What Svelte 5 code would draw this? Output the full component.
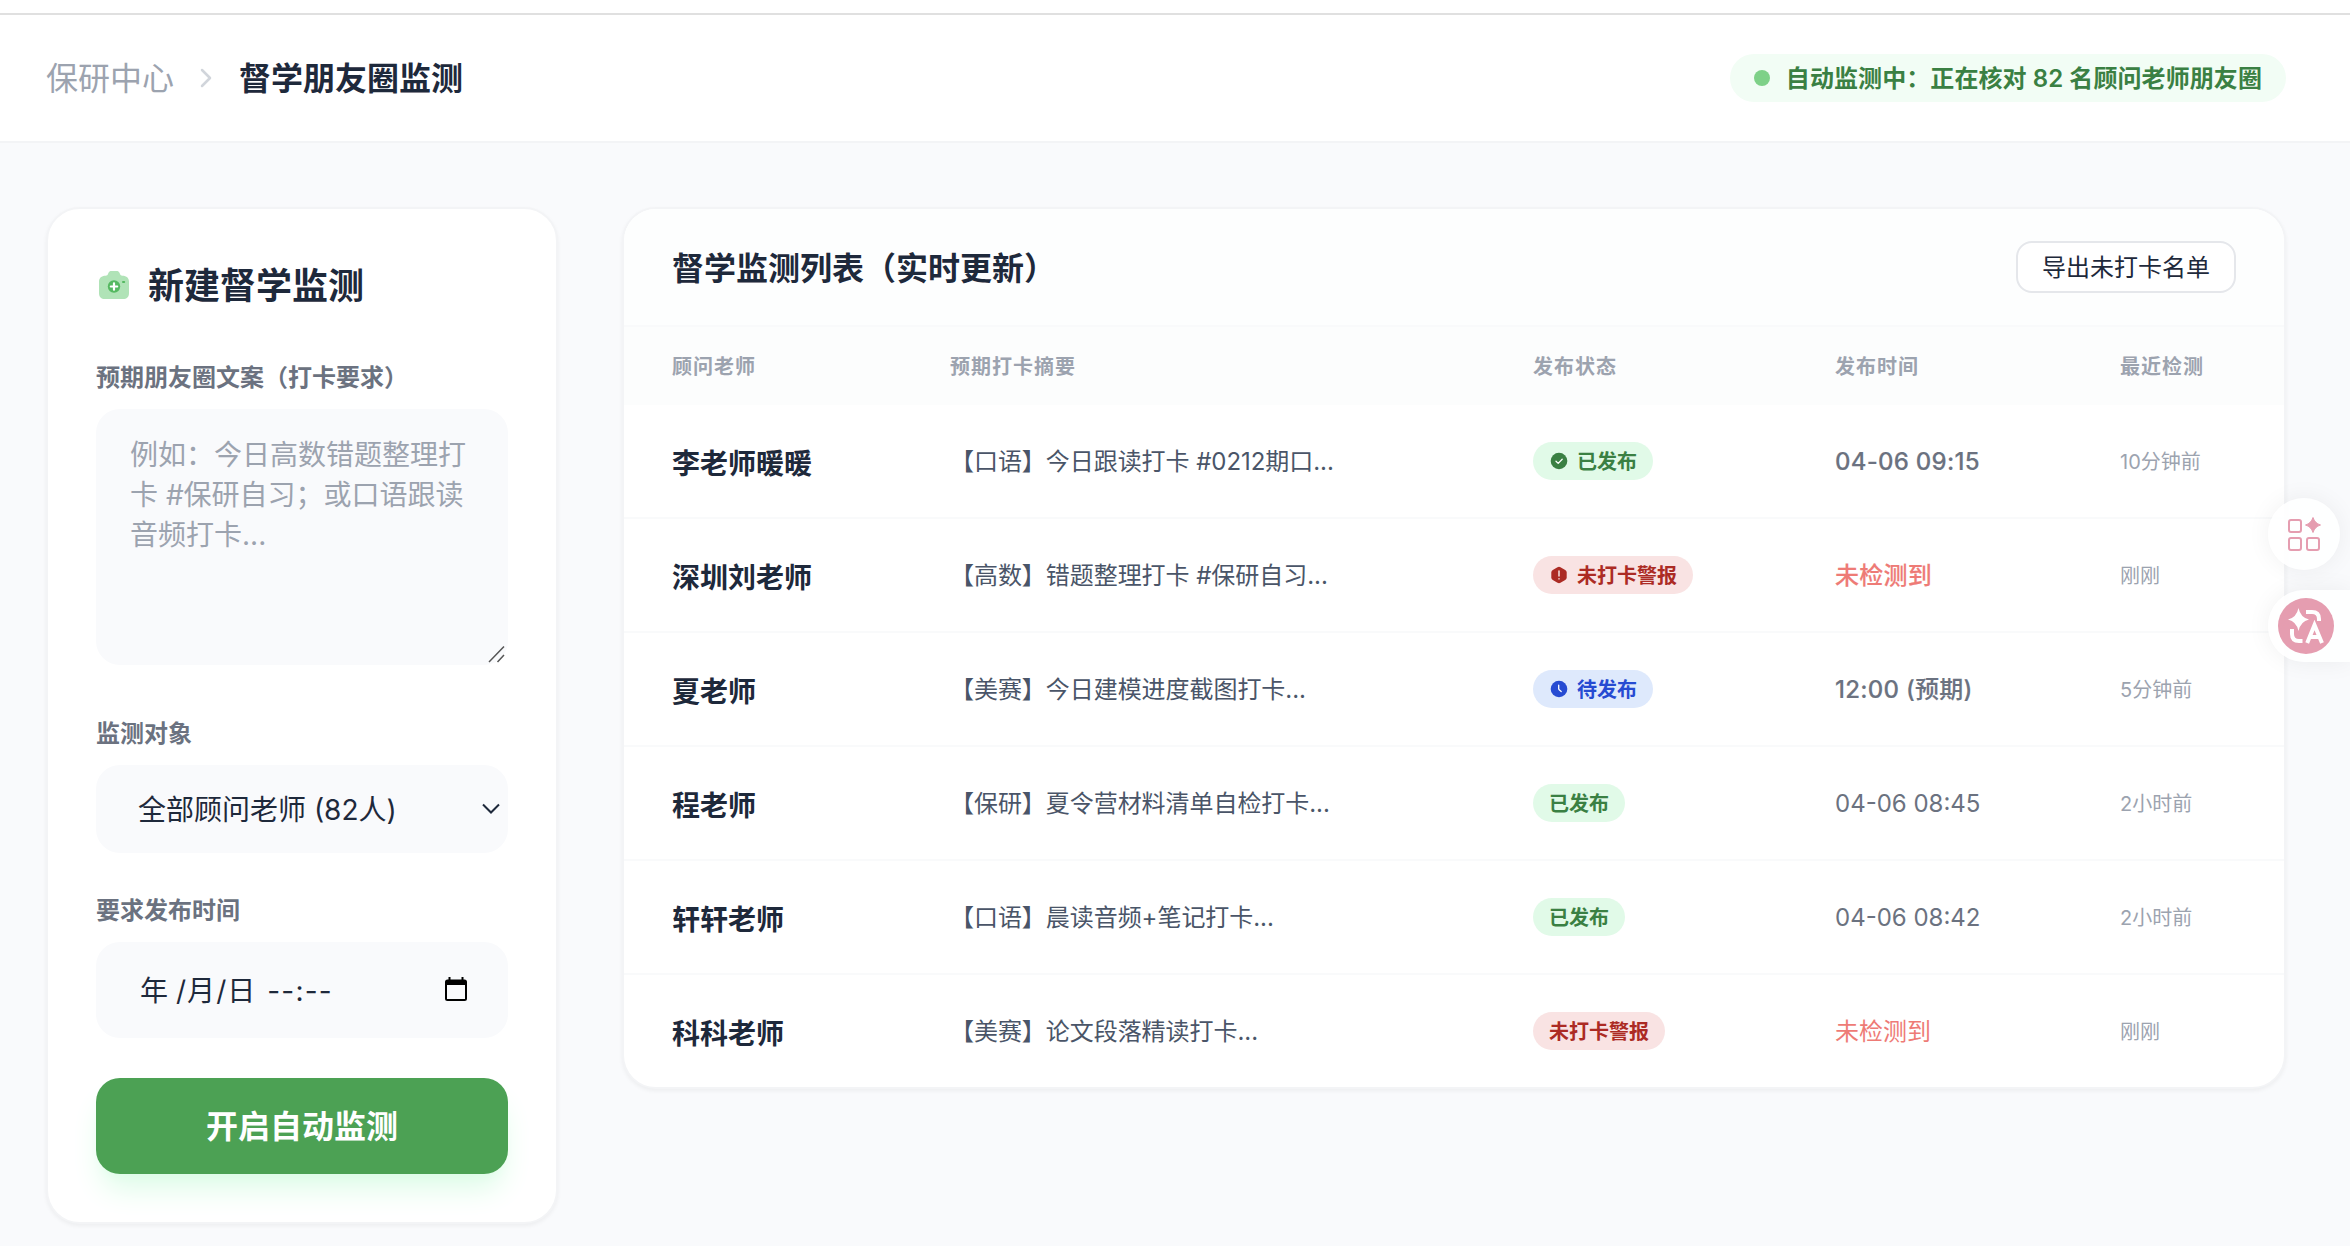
<script>
	let content = '';
	let target = '全部顾问老师 (82人)';

	const columns = ['顾问老师', '预期打卡摘要', '发布状态', '发布时间', '最近检测'];

	const rows = [
		{ name: '李老师暖暖', summary: '【口语】今日跟读打卡 #0212期口...', status: 'done', icon: true, time: '04-06 09:15', checked: '10分钟前' },
		{ name: '深圳刘老师', summary: '【高数】错题整理打卡 #保研自习...', status: 'alert', icon: true, time: '未检测到', checked: '刚刚' },
		{ name: '夏老师', summary: '【美赛】今日建模进度截图打卡...', status: 'pending', icon: true, time: '12:00 (预期)', checked: '5分钟前' },
		{ name: '程老师', summary: '【保研】夏令营材料清单自检打卡...', status: 'done', icon: false, time: '04-06 08:45', checked: '2小时前' },
		{ name: '轩轩老师', summary: '【口语】晨读音频+笔记打卡...', status: 'done', icon: false, time: '04-06 08:42', checked: '2小时前' },
		{ name: '科科老师', summary: '【美赛】论文段落精读打卡...', status: 'alert', icon: false, time: '未检测到', checked: '刚刚' },
	];

	const statusText = {
		done: '已发布',
		alert: '未打卡警报',
		pending: '待发布',
	};
</script>

<div class="page">
	<header class="topbar">
		<nav class="crumbs">
			<span class="crumb">保研中心</span>
			<svg class="crumb-arrow" viewBox="0 0 12 20"><path d="M2 2l8 8-8 8" /></svg>
			<span class="crumb crumb--current">督学朋友圈监测</span>
		</nav>
		<div class="monitor">
			<span class="monitor-dot"></span>
			<span class="monitor-text">自动监测中：正在核对 82 名顾问老师朋友圈</span>
		</div>
	</header>

	<main class="content">
		<section class="card form">
			<h2 class="form-title">
				<svg class="camera" viewBox="0 0 36 36">
					<path fill="#b0e3b7" d="M12.2 6.600C12.900 4.600 14 4 15.600 4h4.800c1.600 0 2.700.6 3.400 2.600.5 1.600 1.200 2.200 2.700 2.200C30.500 8.800 33 11 33 14.600V26c0 4-2.200 6-6 6H9c-3.800 0-6-2-6-6V14.600C3 11 5.500 8.800 9.500 8.800c1.500 0 2.200-.6 2.700-2.200z" />
					<circle cx="18" cy="19.500" r="6.200" fill="#55b961" />
					<path stroke="#fff" stroke-width="2.2" stroke-linecap="round" d="M18 16.300v6.400M14.800 19.500h6.400" />
					<path stroke="#55b961" stroke-width="2" stroke-linecap="round" d="M27 15h1.200" />
				</svg>
				<span>新建督学监测</span>
			</h2>

			<label class="label" for="content">预期朋友圈文案（打卡要求）</label>
			<div class="area">
				<textarea id="content" bind:value={content} placeholder="例如：今日高数错题整理打卡 #保研自习；或口语跟读音频打卡..."></textarea>
				<svg class="grip" viewBox="0 0 18 18"><path d="M1 17L16 1.500M9.500 17l6.500-7" /></svg>
			</div>

			<label class="label" for="target">监测对象</label>
			<button class="field field--select" id="target">
				<span>{target}</span>
				<svg class="caret" viewBox="0 0 18 12"><path d="M1 1.500l8 8 8-8" /></svg>
			</button>

			<label class="label" for="time">要求发布时间</label>
			<button class="field field--date" id="time">
				<span class="date">
					<span class="year">年</span>/<span class="part">月</span>/<span class="part">日</span>
					<span class="clock">--:--</span>
				</span>
				<svg class="calendar" viewBox="0 0 22 24">
					<path fill="#000" fill-rule="evenodd" d="M3.500 0h2v2.500h11V0h2v2.500H19.500A2.500 2.500 0 0 1 22 5v16.500a2.500 2.500 0 0 1-2.500 2.500h-17A2.500 2.500 0 0 1 0 21.500V5a2.500 2.500 0 0 1 2.500-2.500h1zM2 8v14h18V8z" />
				</svg>
			</button>

			<button class="submit">开启自动监测</button>
		</section>

		<section class="card list">
			<div class="list-head">
				<h3>督学监测列表（实时更新）</h3>
				<button class="export">导出未打卡名单</button>
			</div>
			<div class="row row--head">
				{#each columns as column}
					<span>{column}</span>
				{/each}
			</div>
			{#each rows as row}
				<div class="row" class:row--plain={!row.icon}>
					<span class="name">{row.name}</span>
					<span class="summary">{row.summary}</span>
					<span class="status">
						<span class="badge badge--{row.status}">
							{#if row.icon}
								<svg viewBox="0 0 20 20">
									{#if row.status === 'done'}
										<circle cx="10" cy="10" r="8.300" fill="currentColor" />
										<path class="mark" d="M7 10.200l2.200 2.200 4-4.200" />
									{:else if row.status === 'alert'}
										<path fill="currentColor" d="M8.500 2.200q1.500-.8 3 0l4.700 2.700q1.500.9 1.500 2.600v5q0 1.700-1.500 2.600l-4.700 2.700q-1.500.8-3 0l-4.700-2.700q-1.500-.9-1.500-2.600v-5q0-1.700 1.500-2.600z" />
										<path class="mark" d="M10 6v5M10 13.700v.2" />
									{:else}
										<circle cx="10" cy="10" r="8.300" fill="currentColor" />
										<path class="mark" d="M9.700 6.200v3.600q0 .6.500 1l2 1.700" />
									{/if}
								</svg>
							{/if}
							<span class="badge-text">{statusText[row.status]}</span>
						</span>
					</span>
					<span class="time" class:time--missing={row.status === 'alert'}>{row.time}</span>
					<span class="checked">{row.checked}</span>
				</div>
			{/each}
		</section>
	</main>

	<aside class="dock">
		<button class="dock-apps" aria-label="apps">
			<svg viewBox="0 0 36 36">
				<g fill="none" stroke="#e59db0" stroke-width="2">
					<rect x="3" y="4" width="12" height="12" rx="2" />
					<rect x="3" y="22" width="12" height="12" rx="2" />
					<rect x="21" y="22" width="12" height="12" rx="2" />
				</g>
				<path fill="#e59db0" stroke="#e59db0" stroke-linejoin="round" d="M27 1.500q1.800 5.800 7.500 7.500-5.700 1.700-7.500 7.500-1.800-5.800-7.500-7.500 5.700-1.700 7.500-7.500z" />
			</svg>
		</button>
		<button class="dock-translate" aria-label="translate">
			<svg viewBox="0 0 56 56">
				<circle cx="28" cy="28" r="28" fill="#e59db0" />
				<path fill="#fff" d="M20.500 10q2 9.500 10.500 11.500-8.500 2-10.500 11.500-2-9.500-10.500-11.500 8.500-2 10.500-11.500z" />
				<g fill="none" stroke="#fff" stroke-width="4">
					<path d="M28 14h6q7 0 7 7v2" />
					<path d="M14 31v5q0 7 7 7h3.500" />
					<path d="M29.200 45L36.500 27l7.500 18M31.500 39h10" />
				</g>
			</svg>
		</button>
	</aside>
</div>

<style>
	:global(body) {
		margin: 0;
		background: #f9fafc;
	}

	.page {
		position: relative;
		box-sizing: border-box;
		width: 2350px;
		height: 1246px;
		overflow: hidden;
		background: #f9fafc;
		color: #1e293b;
		font-family: Inter, 'Noto Sans CJK SC', sans-serif;
		line-height: 1.5;
	}

	.page * {
		box-sizing: border-box;
	}

	.page::before {
		content: '';
		display: block;
		height: 13px;
		background: #fff;
	}

	button,
	textarea {
		margin: 0;
		padding: 0;
		border: 0;
		background: none;
		color: inherit;
		font: inherit;
		text-align: left;
	}

	svg {
		display: block;
		flex: none;
	}

	.topbar {
		display: flex;
		align-items: center;
		justify-content: space-between;
		height: 130px;
		padding: 0 64px 0 46px;
		border-top: 2px solid #e0e0e0;
		border-bottom: 2px solid #f3f4f6;
		background: #fff;
	}

	.crumbs {
		display: flex;
		align-items: center;
		font-size: 32px;
		line-height: 48px;
	}

	.crumb {
		padding-top: 2px;
		color: #9ca3af;
	}

	.crumb--current {
		color: #1e293b;
		font-weight: 600;
	}

	.crumb-arrow {
		width: 12px;
		height: 20px;
		margin: 0 27px 0 26px;
		fill: none;
		stroke: #d1d5db;
		stroke-width: 2.5;
		stroke-linecap: round;
		stroke-linejoin: round;
	}

	.monitor {
		display: flex;
		align-items: center;
		gap: 16px;
		height: 48px;
		padding: 0 24px;
		border-radius: 24px;
		background: #f2fdf5;
		color: #3a8043;
		font-size: 24px;
		font-weight: 600;
		letter-spacing: 0.08px;
		white-space: nowrap;
	}

	.monitor-dot {
		width: 16px;
		height: 16px;
		border-radius: 50%;
		background: #7ed188;
	}

	.monitor-text {
		padding-top: 2px;
	}

	.content {
		display: grid;
		grid-template-columns: 512px 1fr;
		gap: 64px;
		align-items: start;
		padding: 64px 64px 0 46px;
	}

	.card {
		border: 2px solid #f3f4f6;
		border-radius: 34px;
		background: #fff;
		box-shadow: 0 2px 4px rgba(0, 0, 0, 0.05);
		overflow: hidden;
	}

	.form {
		display: flex;
		flex-direction: column;
		padding: 48px;
	}

	.form-title {
		display: flex;
		align-items: center;
		gap: 16px;
		height: 56px;
		margin: 0 0 49px;
		font-size: 36px;
		font-weight: 600;
		line-height: 56px;
	}

	.form-title span {
		padding-top: 2px;
	}

	.camera {
		width: 36px;
		height: 36px;
	}

	.label {
		height: 32px;
		margin-bottom: 15px;
		color: #6b7280;
		font-size: 24px;
		font-weight: 600;
		line-height: 32px;
		white-space: nowrap;
	}

	.area {
		position: relative;
		height: 256px;
		margin-bottom: 53px;
	}

	textarea {
		display: block;
		width: 412px;
		height: 256px;
		padding: 26px 34px;
		border-radius: 24px;
		background: #f9fafc;
		font-size: 28px;
		line-height: 40px;
		resize: none;
		overflow: hidden;
		outline: none;
	}

	textarea::placeholder {
		color: #9ca3af;
		opacity: 1;
	}

	.grip {
		position: absolute;
		right: 2px;
		bottom: 2px;
		width: 18px;
		height: 18px;
		fill: none;
		stroke: #555;
		stroke-width: 1.5;
	}

	.field {
		display: flex;
		align-items: center;
		justify-content: space-between;
		border-radius: 24px;
		background: #f9fafc;
		font-size: 28px;
		white-space: nowrap;
	}

	.field--select {
		height: 88px;
		margin-bottom: 42px;
		padding: 2px 8px 0 42px;
	}

	.caret {
		width: 18px;
		height: 12px;
		margin-bottom: 2px;
		fill: none;
		stroke: #1e293b;
		stroke-width: 2;
	}

	.field--date {
		height: 96px;
		margin-bottom: 40px;
		padding: 0 41px 0 44px;
	}

	.date {
		display: flex;
		padding-top: 2px;
	}

	.year {
		margin-right: 8px;
	}

	.part {
		margin: 0 1px;
	}

	.clock {
		margin-left: 11px;
		letter-spacing: 1.2px;
	}

	.calendar {
		width: 22px;
		height: 24px;
		margin-bottom: 2px;
	}

	.submit {
		height: 96px;
		padding-top: 2px;
		border-radius: 24px;
		background: #4ca154;
		box-shadow: 0 20px 30px -6px #dcfce7, 0 8px 12px -8px #dcfce7;
		color: #fff;
		font-size: 32px;
		font-weight: 700;
		text-align: center;
	}

	.list-head {
		display: flex;
		align-items: center;
		justify-content: space-between;
		height: 118px;
		padding: 0 48px;
		border-bottom: 2px solid #f9fafb;
		background: #fdfefe;
	}

	h3 {
		margin: 0;
		padding-top: 3px;
		font-size: 32px;
		font-weight: 600;
	}

	.export {
		height: 52px;
		padding: 2px 24px 0;
		border: 2px solid #e5e7eb;
		border-radius: 16px;
		background: #fff;
		font-size: 24px;
	}

	.row {
		display: grid;
		grid-template-columns: 278px 583px 302px 285px 1fr;
		align-items: center;
		height: 114px;
		padding-left: 48px;
		border-bottom: 2px solid #f9fafb;
		white-space: nowrap;
	}

	.row:last-child {
		height: 112px;
		border-bottom: 0;
	}

	.row--head {
		height: 78px;
		padding-top: 2px;
		border-bottom: 0;
		background: #fcfdfd;
		color: #9ca3af;
		font-size: 20px;
		font-weight: 600;
		letter-spacing: 1px;
	}

	.name {
		padding-top: 5px;
		font-size: 28px;
		font-weight: 600;
	}

	.summary {
		padding-top: 2px;
		color: #4a5568;
		font-size: 24px;
		letter-spacing: -0.05px;
	}

	.time {
		padding-top: 2px;
		color: #6b7280;
		font-size: 24px;
		font-weight: 500;
		letter-spacing: 0.25px;
		-webkit-text-stroke: 0.15px currentColor;
	}

	.row--plain .time {
		font-weight: 400;
		letter-spacing: 0;
		-webkit-text-stroke: 0;
	}

	.time--missing {
		color: #ee7b76;
	}

	.checked {
		padding-top: 2px;
		color: #9ca3af;
		font-size: 20px;
	}

	.status {
		display: flex;
	}

	.badge {
		display: flex;
		align-items: center;
		gap: 8px;
		height: 38px;
		padding: 0 16px;
		border-radius: 19px;
		font-size: 20px;
		font-weight: 600;
	}

	.badge-text {
		padding-top: 1px;
	}

	.badge svg {
		width: 20px;
		height: 20px;
	}

	.mark {
		fill: none;
		stroke: #fff;
		stroke-width: 1.3;
		stroke-linecap: round;
		stroke-linejoin: round;
	}

	.badge--done {
		background: #e1fae8;
		color: #3a8043;
	}

	.badge--alert {
		background: #f9e3e3;
		color: #ac2b24;
	}

	.badge--pending {
		background: #dee9fc;
		color: #264bd2;
	}

	.dock {
		position: absolute;
		top: 498px;
		right: 0;
		display: flex;
		flex-direction: column;
		gap: 20px;
		width: 82px;
	}

	.dock-apps,
	.dock-translate {
		display: flex;
		align-items: center;
		height: 72px;
		background: rgba(255, 255, 255, 0.85);
		box-shadow: 0 0 24px rgba(0, 0, 0, 0.06);
	}

	.dock-apps {
		justify-content: center;
		width: 72px;
		border-radius: 36px;
	}

	.dock-apps svg {
		width: 36px;
		height: 36px;
	}

	.dock-translate {
		width: 82px;
		padding-left: 10px;
		border-radius: 36px 0 0 36px;
	}

	.dock-translate svg {
		width: 56px;
		height: 56px;
	}
</style>
